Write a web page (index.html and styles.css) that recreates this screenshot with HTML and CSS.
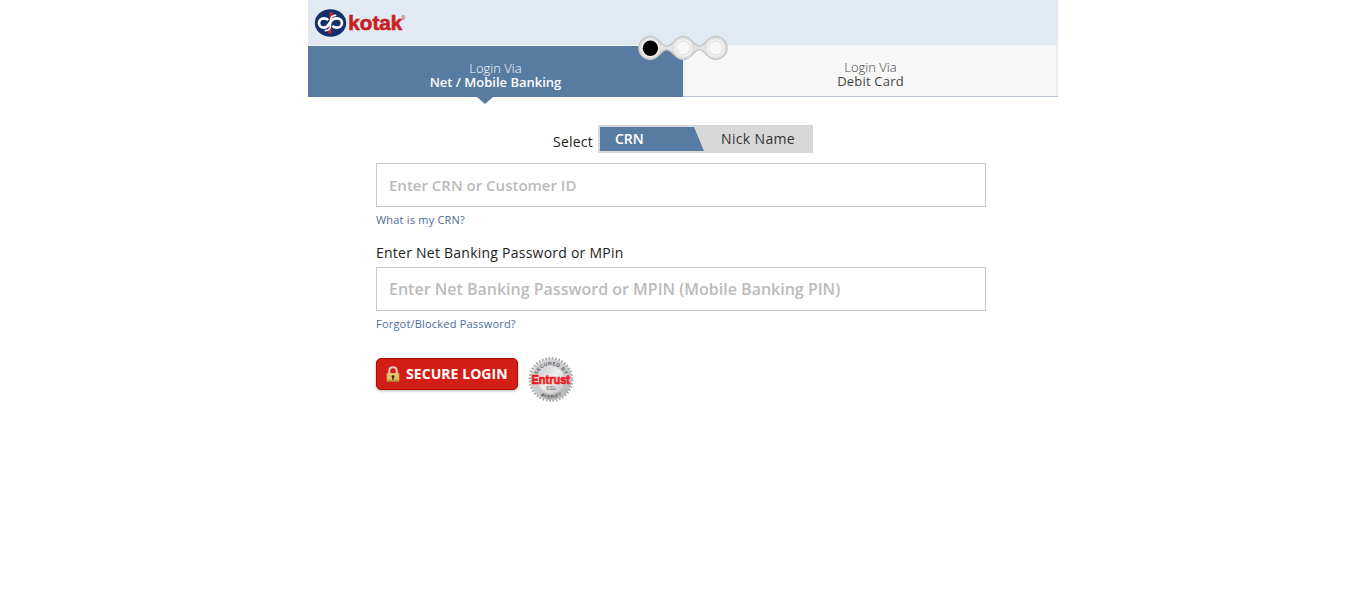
FILE: index.html
```html
<!DOCTYPE html>
<html lang="en">
<head>
<meta charset="utf-8">
<title>Kotak Net Banking</title>
<link rel="stylesheet" href="styles.css">
</head>
<body>
<div class="page">
  <header class="header">
    <svg class="logo" width="100" height="34" viewBox="0 0 100 34" role="img" aria-label="kotak">
      <ellipse cx="16.5" cy="17" rx="15.7" ry="13.8" fill="#12306a"/>
      <path d="M17.2 6.2V13M15.8 21V27.4" fill="none" stroke="#d3202a" stroke-width="3.2"/>
      <path d="M14.2 14.2C13 12.9 11.8 12.3 10 12.3C7 12.3 5 14.3 5 17S7 21.7 10 21.7C13.2 21.7 14.3 19.6 16.2 16.4C18 13.2 19.8 12.3 22.8 12.3C25.9 12.3 28 14.3 28 17S25.9 21.7 22.8 21.7C20.8 21.7 19.5 21 18.5 19.8" fill="none" stroke="#fff" stroke-width="2.7"/>
      <path d="M22.3 9.4C18.5 9.2 16.5 11.2 16.5 14.5V19.5C16.5 22.8 14.5 24.8 10.8 24.6" fill="none" stroke="#fff" stroke-width="1.6"/>
      <text class="logo-name" x="34.3" y="24" textLength="54" lengthAdjust="spacingAndGlyphs">kotak</text>
      <text class="logo-mark" x="87.3" y="13.5">®</text>
    </svg>
    <svg class="steps" width="92" height="26" viewBox="0 0 92 26" aria-hidden="true">
      <defs>
        <radialGradient id="ring"><stop offset="0" stop-color="#fff"/><stop offset=".75" stop-color="#f5f5f5"/><stop offset="1" stop-color="#d6d6d6"/></radialGradient>
      </defs>
      <path d="M13.3 1.6C22 1.6 23.5 11.2 29.7 11.2S37.5 1.6 46.2 1.6C55 1.6 56.5 11.2 62.4 11.2S70 1.6 78.6 1.6A11.4 11.4 0 0 1 78.6 24.4C70 24.4 68.5 14.8 62.4 14.8S55 24.4 46.2 24.4C37.5 24.4 36 14.8 29.7 14.8S22 24.4 13.3 24.4A11.4 11.4 0 0 1 13.3 1.6Z" fill="#e4e4e4" stroke="#c6c6c6" stroke-width="1.5"/>
      <g fill="url(#ring)">
        <circle cx="13.3" cy="13" r="10.7"/><circle cx="46.2" cy="13" r="10.7"/><circle cx="78.6" cy="13" r="10.7"/>
      </g>
      <circle cx="13.4" cy="13.3" r="7.7" fill="#000"/>
      <g fill="#f7f7f7" stroke="#e4e4e4" stroke-width="1.3">
        <circle cx="46.2" cy="13" r="7"/><circle cx="78.6" cy="13" r="7"/>
      </g>
    </svg>
  </header>
  <nav class="tabs">
    <a class="tab tab-active"><span class="tab-small">Login Via</span><span class="tab-name">Net / Mobile Banking</span></a>
    <a class="tab tab-card"><span class="tab-small">Login Via</span><span class="tab-name">Debit Card</span></a>
  </nav>
  <main class="form">
    <div class="select-row">
      <span class="select-label">Select</span>
      <div class="toggle"><span class="toggle-on">CRN</span><span class="toggle-off">Nick Name</span></div>
    </div>
    <input class="field field-crn" type="text" placeholder="Enter CRN or Customer ID">
    <a class="help">What is my CRN?</a>
    <label class="label" for="pin">Enter Net Banking Password or MPin</label>
    <input class="field" id="pin" type="password" placeholder="Enter Net Banking Password or MPIN (Mobile Banking PIN)">
    <a class="help">Forgot/Blocked Password?</a>
    <div class="actions">
      <button class="login" type="button">
        <svg class="lock" width="14" height="16" viewBox="0 0 14 16" aria-hidden="true">
          <path d="M3.3 8V4.5C3.3 0 10.7 0 10.7 4.5V8" fill="none" stroke="#d9d2c5" stroke-width="2"/>
          <rect x=".7" y="7" width="12.6" height="8.6" rx="1.2" fill="#d9b452"/>
          <path d="M1.5 8H12.5M1.5 10H12.5M1.5 12H12.5" stroke="#f0d995" stroke-width=".8"/>
          <path d="M1.2 15H12.8" stroke="#a47a25"/>
          <circle cx="7" cy="10.6" r="1.4" fill="#3a2410"/><path d="M7 11V13.8" stroke="#3a2410" stroke-width="1.4"/>
        </svg>
        <span class="login-text">SECURE LOGIN</span>
      </button>
      <svg class="seal" width="48" height="48" viewBox="0 0 48 48" role="img" aria-label="Entrust">
        <defs>
          <linearGradient id="metal" x1="0" y1="0" x2="1" y2="1"><stop offset="0" stop-color="#d8d9da"/><stop offset=".45" stop-color="#cbccce"/><stop offset="1" stop-color="#b2b3b5"/></linearGradient>
          <linearGradient id="plate" x1="0" y1="0" x2="1" y2="1"><stop offset="0" stop-color="#c7c8ca"/><stop offset=".5" stop-color="#efefef"/><stop offset="1" stop-color="#bfc0c2"/></linearGradient>
          <path id="arc-top" d="M9.2 24A14.8 14.8 0 0 1 38.8 24"/>
          <path id="arc-bottom" d="M5.5 24A18.5 18.5 0 0 0 42.5 24"/>
        </defs>
        <circle cx="24" cy="23.5" r="20.7" fill="url(#metal)"/>
        <circle cx="24" cy="23.5" r="21.3" fill="none" stroke="#a6a7a9" stroke-width="2.2" stroke-dasharray="1.65 1.7"/>
        <circle cx="24" cy="23.5" r="13.2" fill="url(#plate)" stroke="#e4e4e5" stroke-width=".7"/>
        <text class="seal-ring"><textPath href="#arc-top" startOffset="23.2" text-anchor="middle">SECURED BY</textPath></text>
        <text class="seal-ring"><textPath href="#arc-bottom" startOffset="29" text-anchor="middle">★VERIFY</textPath></text>
        <text class="seal-name" x="4.5" y="28" textLength="38.5" lengthAdjust="spacingAndGlyphs">Entrust</text>
        <text class="seal-ssl" x="19" y="34" textLength="10">SSL</text>
      </svg>
    </div>
  </main>
</div>
</body>
</html>
```
FILE: styles.css
```css
* { box-sizing: border-box; }
body { margin: 0; background: #fff; color: #222; font-family: "Open Sans", sans-serif; font-size: 14px; }
.page { width: 750px; margin: 0 auto; }
.header { position: relative; height: 45px; background: #e1e9f2; padding: 6px 6px 0; }
.logo { display: block; }
.logo-name { font: 700 20px "Liberation Sans", sans-serif; fill: #c8201f; stroke: #c8201f; stroke-width: .6px; }
.logo-mark { font: 5px "Open Sans", sans-serif; fill: #c8201f; }
.steps { position: absolute; left: 329px; top: 35px; z-index: 2; }
.tabs { display: flex; height: 52px; }
.tab { position: relative; width: 375px; display: flex; flex-direction: column; align-items: center; font-size: 13px; line-height: 14px; }
.tab-small { font-weight: 300; }
.tab-active { background: #587ba1; color: #fff; border-top: 1px solid #f4f7fa; padding-top: 15px; }
.tab-active .tab-name { font-weight: 600; }
.tab-active::after { content: ""; position: absolute; left: 169px; top: 51px; border: 8px solid transparent; border-top: 7px solid #587ba1; border-bottom: 0; }
.tab-card { background: #f7f7f7; color: #444; border-bottom: 1px solid #b9c5d5; padding-top: 15px; box-shadow: inset 3px 0 1px #eff2f6, inset -2px 0 1px #e9edf3; }
.tab-card .tab-name { letter-spacing: .2px; }
.form { width: 610px; margin-left: 68px; padding-top: 28px; }
.select-row { display: flex; height: 38px; padding-left: 177px; gap: 5px; }
.select-label { width: 40px; padding-top: 7px; line-height: 19px; letter-spacing: .2px; }
.toggle { display: flex; width: 215px; height: 28px; padding: 2px; background: #d8d8d8; line-height: 24px; }
.toggle-on { width: 104px; height: 24px; padding-left: 15px; background: #587ba1; color: #fff; font-weight: 600; clip-path: polygon(0 0, 94px 0, 100% 100%, 0 100%); }
.toggle-off { padding-left: 17px; color: #333; letter-spacing: .35px; }
.field { display: block; width: 610px; height: 44px; border: 1px solid #c8c8c8; border-radius: 0; padding: 0 12px; background: #fff; font: 600 16px "Open Sans", sans-serif; }
.field-crn { padding-bottom: 1px; font-size: 15px; }
.field::placeholder { color: #bbb; opacity: 1; }
.help { display: block; height: 36px; padding-top: 5px; color: #4c6d98; font-size: 11px; line-height: 16px; letter-spacing: .2px; }
.label { display: block; height: 24px; line-height: 20px; letter-spacing: .24px; }
.actions { display: flex; gap: 9px; padding-top: 9px; }
.login { display: flex; align-items: center; gap: 6px; margin-top: 2px; width: 142px; height: 32px; padding: 0 9px 2px; border: 1px solid #a80e0b; border-radius: 5px; background: #d31e17; box-shadow: 0 1px 3px rgba(0, 0, 0, .3); color: #fff; font: 700 14px "Open Sans", sans-serif; white-space: nowrap; }
.login-text { letter-spacing: .06px; }
.lock { flex: none; position: relative; top: 1px; }
.seal-ring { font: 700 5px "Liberation Sans", sans-serif; fill: #626366; letter-spacing: .3px; }
.seal-name { font: 900 12px "Liberation Sans", sans-serif; fill: #ed1b24; stroke: #ed1b24; stroke-width: .7px; }
.seal-ssl { font: 5px "Liberation Sans", sans-serif; fill: #626366; }
```
